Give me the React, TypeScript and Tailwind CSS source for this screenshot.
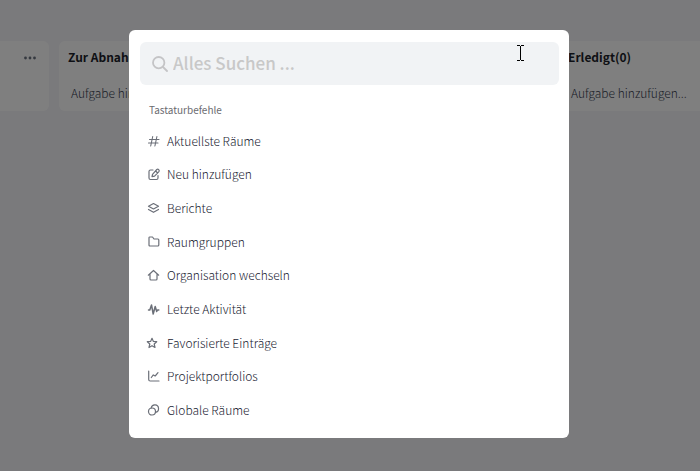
import type { ReactNode } from 'react';

const icons: Record<string, ReactNode> = {
  hash: <path d="M1.500 4.500h9.500M.5 8h9.500M4.700 1.500 2.700 11M8.900 1.500l-2 9.500" strokeWidth="1.100" />,
  edit: (
    <>
      <path d="M5 2H2.500Q1 2 1 3.500V10Q1 11.500 2.500 11.500H8.500Q10 11.500 10 10V7.500" />
      <path d="M4 8.700 4.500 6.300 8.800 1.500Q9.800 .7 10.700 1.600T10.900 3.600L6.600 8.200ZM7.700 3 9.600 5" />
    </>
  ),
  layers: (
    <>
      <path d="M5.500 1.500 10.500 4.300 5.500 7 .5 4.300Z" />
      <path d="M.5 7.500 5.500 10.300l5-2.800" />
    </>
  ),
  folder: <path d="M1.500 1h3l1.500 2h4q.8 0 .8 1v5q0 1-1 1h-7.800q-1 0-1-1V2q0-1 .5-1Z" />,
  home: <path d="M.3 6.200 5.500 1.500 10.700 6.200M2 5.200v4.800q0 1 1 1h5q1 0 1-1V5.200" />,
  activity: <path d="M.5 7h1.300L3.500 2l1.700 9L7.200 3.500 8.700 8.500 9.500 7h1.300" strokeWidth="1.500" />,
  star: <path d="M4 1.300 5.400 4.400 8.700 4.700 6.200 7 7 10.500 4 8.700 1 10.500 1.800 7-.7 4.700 2.600 4.400Z" />,
  chart: <path d="M.7 1v8.500Q.7 11 2.200 11H11M3.300 7.500 5.300 4.900 7.200 6 10 2.700" />,
  rings: (
    <>
      <circle cx="4" cy="7.500" r="3.500" />
      <path d="M3.200 4A3.700 3.700 0 1 1 7.500 8.300" />
    </>
  ),
};

const commands = [
  { icon: 'hash', label: 'Aktuellste Räume' },
  { icon: 'edit', label: 'Neu hinzufügen' },
  { icon: 'layers', label: 'Berichte' },
  { icon: 'folder', label: 'Raumgruppen' },
  { icon: 'home', label: 'Organisation wechseln' },
  { icon: 'activity', label: 'Letzte Aktivität' },
  { icon: 'star', label: 'Favorisierte Einträge' },
  { icon: 'chart', label: 'Projektportfolios' },
  { icon: 'rings', label: 'Globale Räume' },
];

function Column({ title }: { title: string }) {
  return (
    <section className="h-[70px] w-60 shrink-0 rounded-md bg-white px-[9px] pt-2">
      <h2 className="h-4 text-[12px] leading-4 font-bold text-[#1c1f2b]">{title}</h2>
      <button className="mt-5 ml-[3px] block text-[12px] leading-4 font-light text-[#374151]">Aufgabe hinzufügen...</button>
    </section>
  );
}

function Board() {
  return (
    <main className="flex gap-2.5 overflow-hidden pt-[41px]">
      <section className="flex h-[70px] w-[49px] shrink-0 items-start justify-end rounded-r-md bg-white pt-[15px] pr-[13px]">
        <button aria-label="Menü" className="text-[#6b7280]">
          <svg width="12" height="4" viewBox="0 0 12 4" fill="currentColor">
            <circle cx="1.500" cy="2" r="1.400" />
            <circle cx="6" cy="2" r="1.400" />
            <circle cx="10.500" cy="2" r="1.400" />
          </svg>
        </button>
      </section>
      <Column title="Zur Abnahme(0)" />
      <Column title="" />
      <Column title="Erledigt(0)" />
    </main>
  );
}

function SearchDialog() {
  return (
    <div role="dialog" aria-label="Alles Suchen" className="w-[440px] rounded-md bg-white px-[11px] pt-3 pb-[11px]">
      <label className="mr-[-1px] flex h-[43px] items-center gap-[5px] rounded-md bg-[#f1f3f5] px-3">
        <svg className="shrink-0 text-[#c4c4c6]" width="16" height="16" viewBox="0 0 16 16" fill="none" stroke="currentColor" strokeWidth="1.800" strokeLinecap="round">
          <circle cx="6.700" cy="6.700" r="5.700" />
          <path d="m11 11 4 4" />
        </svg>
        <input
          type="text"
          aria-label="Alles Suchen"
          placeholder="Alles Suchen ..."
          className="w-full bg-transparent pb-px text-[17px] font-medium outline-none placeholder:text-[#c8c8c8]"
        />
      </label>
      <h3 className="mt-[17px] pl-[9px] text-[10px] leading-4 text-[#6b6b70]">Tastaturbefehle</h3>
      <ul className="mt-1.5 grid min-h-[303px] auto-rows-fr">
        {commands.map(({ icon, label }) => (
          <li key={icon} className="flex">
            <button className="flex w-full items-center gap-2 pl-[7px] text-left text-[12px] leading-4 font-light text-[#1a2332]">
              <svg className="shrink-0 text-[#6b6f78]" width="12" height="12" viewBox="-1 0 12 12" overflow="visible" fill="none" stroke="currentColor" strokeWidth="1.200" strokeLinecap="round" strokeLinejoin="round">
                {icons[icon]}
              </svg>
              {label}
            </button>
          </li>
        ))}
      </ul>
    </div>
  );
}

export default function App() {
  return (
    <div className="relative min-h-screen overflow-hidden bg-[#f4f4f9] font-['Noto_Sans_CJK_SC','Source_Sans_Pro',sans-serif]">
      <Board />
      <div className="absolute inset-0 flex items-start justify-center bg-black/50 pt-[30px] pr-0.5">
        <SearchDialog />
      </div>
      <svg className="pointer-events-none absolute top-[45px] left-[517px]" width="7" height="16" viewBox="0 0 7 16" fill="none" stroke="#000" shapeRendering="crispEdges">
        <path d="M0 .5h3M4 .5h3M3.500 1v14M0 15.500h3M4 15.500h3" />
      </svg>
    </div>
  );
}
